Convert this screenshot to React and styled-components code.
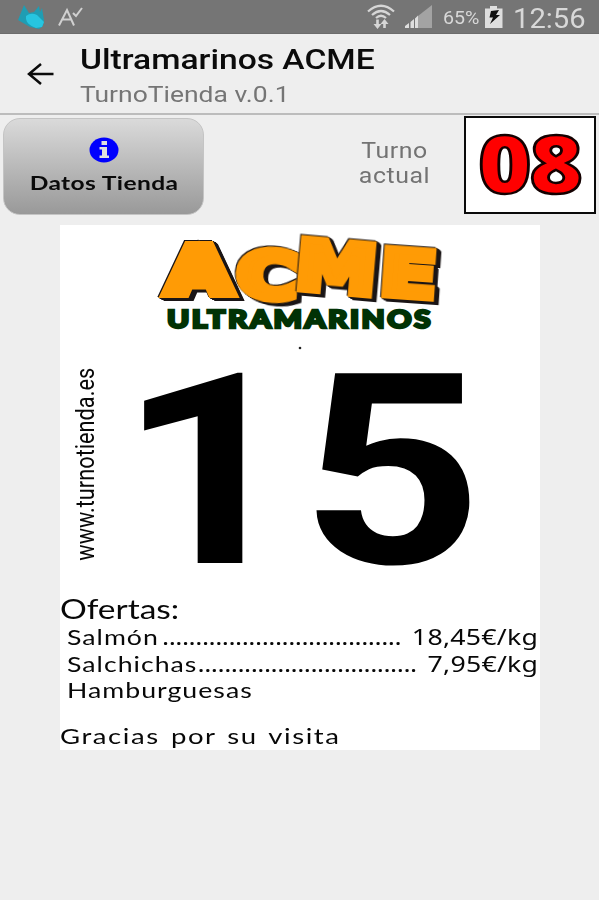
import styled, { createGlobalStyle } from "styled-components";

const offers = [
  { name: "Salmón", dots: 36, price: "18,45€/kg" },
  { name: "Salchichas", dots: 33, price: "7,95€/kg" },
  { name: "Hamburguesas", dots: 0, price: "" },
];

const WifiIcon = () => (
  <svg width="28" height="26" viewBox="0 0 28 26" fill="none" stroke="#d6d6d6">
    <path d="M1 7.5Q14-4 27 7.5" strokeWidth="2.2" />
    <path d="M5 11Q14 3 23 11" strokeWidth="2.2" />
    <path d="M9 14Q14 9.5 19 14" strokeWidth="2.2" />
    <path d="M10.5 15.5V22M17.5 24V18" strokeWidth="2.6" />
    <path d="M6.5 20h8l-4 5zM13.5 20h8l-4-5z" fill="#d6d6d6" stroke="none" />
  </svg>
);

const SignalIcon = () => (
  <svg width="28" height="24" viewBox="0 0 28 24">
    <path d="M13 11L27 0v23H13z" fill="#a3a3a3" />
    <path d="M0 23v-2l4-3v5zM5.5 23v-6l3.5-3v9zM10 23v-9.500l3-3V23z" fill="#dedede" />
  </svg>
);

const BatteryIcon = () => (
  <svg width="18" height="22" viewBox="0 0 18 22">
    <path d="M5 0h7v2.500h5.500V22H0V2.500h5z" fill="#dedede" />
    <path d="M6 5l8-1-3 5h4L5 18l3-6.500H4.500z" fill="#111" />
  </svg>
);

const AppIcon = () => (
  <svg width="28" height="25" viewBox="0 0 28 25">
    <path d="M7 1l5 8 5-1 5-6 1 6 2-4 2 12-1 6-4 3-9-2-12-7 2-5z" fill="#1f9db3" />
    <path d="M9 12q5-4 11-1l7 7-2 5-6 1q-9-3-10-9z" fill="#27c5e0" />
  </svg>
);

const CheckIcon = () => (
  <svg width="26" height="20" viewBox="0 0 26 20" fill="none" stroke="#d0d0d0" strokeWidth="2">
    <path d="M1 18.500L9 3l7 15.500M4 12.500h9.500M15 6l3 3 6-8" />
  </svg>
);

const BackIcon = () => (
  <svg width="28" height="24" viewBox="0 0 28 24" fill="none" stroke="#0b0b0b" strokeWidth="2.500">
    <path d="M27.500 12H3M15 2L3 12 15 22" />
  </svg>
);

const InfoIcon = () => (
  <svg width="30" height="26" viewBox="0 0 30 26">
    <ellipse cx="15" cy="13" rx="14.500" ry="12.500" fill="#0000fe" />
    <path d="M12.500 4h5.500v4h-5.500zM10.500 10H18v8.500h2V21h-9.500v-2.500H13V12.500h-2.500z" fill="#dedede" />
  </svg>
);

const letters = [
  { char: "A", transform: "translate(18 67)", width: 62, size: 63, stroke: 11 },
  { char: "C", transform: "translate(86 70) rotate(4)", width: 60, size: 62, stroke: 9 },
  { char: "M", transform: "translate(144 63) rotate(5)", width: 81, size: 67, stroke: 8 },
  { char: "E", transform: "translate(229 69) rotate(4)", width: 56, size: 63, stroke: 8 },
];

const Logo = () => (
  <LogoSvg viewBox="0 0 300 130">
    {letters.map((l) => (
      <Letter
        key={l.char}
        transform={l.transform}
        fontSize={l.size}
        strokeWidth={l.stroke}
        textLength={l.width}
        lengthAdjust="spacingAndGlyphs"
      >
        {l.char}
      </Letter>
    ))}
    <Tagline x="17" y="103" textLength="266" lengthAdjust="spacingAndGlyphs">
      ULTRAMARINOS
    </Tagline>
    <circle cx="150" cy="123" r="1.300" fill="#222" />
  </LogoSvg>
);

const App = () => {
  return (
    <Page>
      <GlobalStyle />
      <StatusBar>
        <Group>
          <AppIcon />
          <CheckIcon />
        </Group>
        <StatusRight>
          <WifiIcon />
          <SignalIcon />
          <Battery>65%</Battery>
          <BatteryIcon />
          <Clock>12:56</Clock>
        </StatusRight>
      </StatusBar>

      <Header>
        <BackIcon />
        <Titles>
          <Title>Ultramarinos ACME</Title>
          <Subtitle>TurnoTienda v.0.1</Subtitle>
        </Titles>
      </Header>

      <Toolbar>
        <ShopButton>
          <InfoIcon />
          <ButtonText>Datos Tienda</ButtonText>
        </ShopButton>
        <TurnLabel>
          <span>Turno</span>
          <span>actual</span>
        </TurnLabel>
        <TurnBox>
          <TurnNumber>08</TurnNumber>
        </TurnBox>
      </Toolbar>

      <Ticket>
        <Logo />
        <NumberRow>
          <Website>www.turnotienda.es</Website>
          <BigNumber>15</BigNumber>
        </NumberRow>
        <OffersTitle>Ofertas:</OffersTitle>
        {offers.map((offer) => (
          <Offer key={offer.name}>
            <OfferName>{offer.name}</OfferName>
            {offer.price && (
              <Price>
                <Dots>{".".repeat(offer.dots)}</Dots>
                <span>{offer.price}</span>
              </Price>
            )}
          </Offer>
        ))}
        <Thanks>Gracias por su visita</Thanks>
      </Ticket>
    </Page>
  );
};

export default App;

const GlobalStyle = createGlobalStyle`
  * {
    box-sizing: border-box;
  }
  body {
    margin: 0;
    background: #eeeeee;
  }
`;

const Page = styled.div`
  width: 599px;
  height: 900px;
  overflow: hidden;
  background: #eeeeee;
  font-family: Roboto, sans-serif;
`;

const StatusBar = styled.div`
  display: flex;
  justify-content: space-between;
  height: 34px;
  padding: 0 13px 0 17px;
  background: #757575;
  border-bottom: 1px solid #6c6c6c;
  color: #d8d8d8;
`;

const Group = styled.div`
  display: flex;
  align-items: center;
  gap: 13px;
`;

const StatusRight = styled.div`
  display: flex;
  align-items: center;
  gap: 10px;
  width: 219px;
`;

const Battery = styled.span`
  width: 32px;
  font-size: 18px;
  line-height: 32px;
  padding-top: 3px;
  white-space: nowrap;
  transform: scaleX(1.09);
  transform-origin: left;
`;

const Clock = styled.span`
  font-size: 27px;
  line-height: 32px;
  padding-top: 5px;
  transform: scaleX(1.08);
  transform-origin: left;
`;

const Header = styled.header`
  display: flex;
  align-items: center;
  gap: 26px;
  height: 81px;
  padding: 0 26px;
  border-bottom: 2px solid #bcbcbc;
  white-space: nowrap;
`;

const Titles = styled.div`
  flex: 1;
  padding-top: 4px;
`;

const Title = styled.h1`
  margin: 0;
  font-size: 28px;
  font-weight: 500;
  line-height: 36px;
  color: #0b0b0b;
  transform: scaleX(1.2);
  transform-origin: left;
`;

const Subtitle = styled.div`
  font-size: 22.5px;
  line-height: 32px;
  color: #757575;
  transform: scaleX(1.175);
  transform-origin: left;
`;

const Toolbar = styled.div`
  display: flex;
  height: 110px;
  padding: 1px 3px;
`;

const ShopButton = styled.button`
  display: flex;
  flex-direction: column;
  align-items: center;
  width: 201px;
  height: 97px;
  margin-top: 2px;
  padding: 18px 0 0;
  border: 1px solid #c4c4c4;
  border-radius: 17px;
  background: linear-gradient(#dadada, #999999);
`;

const ButtonText = styled.span`
  margin-top: 7px;
  font-family: Lato, sans-serif;
  font-size: 19.5px;
  font-weight: 700;
  line-height: 26px;
  letter-spacing: 0.3px;
  color: #0a0a0a;
  white-space: nowrap;
  transform: scaleX(1.26);
`;

const TurnLabel = styled.div`
  display: flex;
  flex-direction: column;
  align-items: center;
  width: 139px;
  margin-left: 121px;
  padding-top: 22px;
  font-size: 22px;
  line-height: 25px;
  color: #737373;
  letter-spacing: 0.5px;
  transform: scaleX(1.13);
`;

const TurnBox = styled.div`
  display: flex;
  align-items: center;
  justify-content: center;
  width: 132px;
  height: 98px;
  border: 2px solid #0a0a0a;
  background: #fff;
`;

const TurnNumber = styled.span`
  margin: -5px 2px 0 0;
  font-family: "Open Sans", sans-serif;
  font-size: 79px;
  font-weight: 800;
  line-height: 94px;
  letter-spacing: -2px;
  color: #ff0000;
  -webkit-text-stroke: 2.5px #140000;
  transform: scaleX(1.16);
`;

const Ticket = styled.main`
  width: 480px;
  height: 525px;
  margin: 0 auto 0 60px;
  background: #fff;
  font-family: Lato, sans-serif;
  color: #080808;
  white-space: nowrap;
`;

const LogoSvg = styled.svg`
  display: block;
  width: 300px;
  height: 130px;
  margin-left: 90px;
  overflow: visible;
`;

/* cartoon letter: thick face, thin dark outline, extruded to the right */
const Letter = styled.text`
  font-family: "DejaVu Sans", sans-serif;
  font-weight: 700;
  fill: #ff9b05;
  stroke: #ff9b05;
  stroke-linejoin: miter;
  filter: drop-shadow(1px 1px 0 #1a1516) drop-shadow(-1px -1px 0 #1a1516) drop-shadow(2px 1px 0 #1a1516)
    drop-shadow(2px 1px 0 #1a1516);
`;

const Tagline = styled.text`
  font-family: Lato, sans-serif;
  font-size: 24px;
  font-weight: 900;
  letter-spacing: 2px;
  fill: #013205;
  stroke: #013205;
  stroke-width: 2.4;
`;

const NumberRow = styled.div`
  display: flex;
  height: 238px;
  font-family: Roboto, sans-serif;
`;

const Website = styled.div`
  width: 30px;
  height: 220px;
  margin: 0 0 0 11px;
  font-size: 25px;
  line-height: 30px;
  text-align: center;
  writing-mode: vertical-rl;
  transform: rotate(180deg) scaleY(0.87);
`;

const BigNumber = styled.div`
  margin-left: 17px;
  font-size: 267px;
  font-weight: 700;
  line-height: 233px;
  color: #000;
  transform: scaleX(1.19);
  transform-origin: left;
`;

const OffersTitle = styled.div`
  font-size: 27px;
  line-height: 30px;
  padding-top: 1px;
  transform: scaleX(1.24);
  transform-origin: left;
`;

const Offer = styled.div`
  display: flex;
  justify-content: space-between;
  height: 26.5px;
  padding: 0 2px 0 7px;
  font-size: 21px;
  line-height: 26px;
`;

const OfferName = styled.span`
  letter-spacing: 0.8px;
  transform: scaleX(1.27);
  transform-origin: left;
`;

const Price = styled.span`
  display: flex;
  gap: 8.5px;
  font-family: "Noto Sans", sans-serif;
  letter-spacing: 0.2px;
  transform: scaleX(1.27);
  transform-origin: right;
`;

const Dots = styled.span`
  letter-spacing: -0.4px;
`;

const Thanks = styled.div`
  margin-top: 18px;
  font-size: 21px;
  line-height: 28px;
  letter-spacing: 1.2px;
  word-spacing: 2px;
  transform: scaleX(1.31);
  transform-origin: left;
`;
